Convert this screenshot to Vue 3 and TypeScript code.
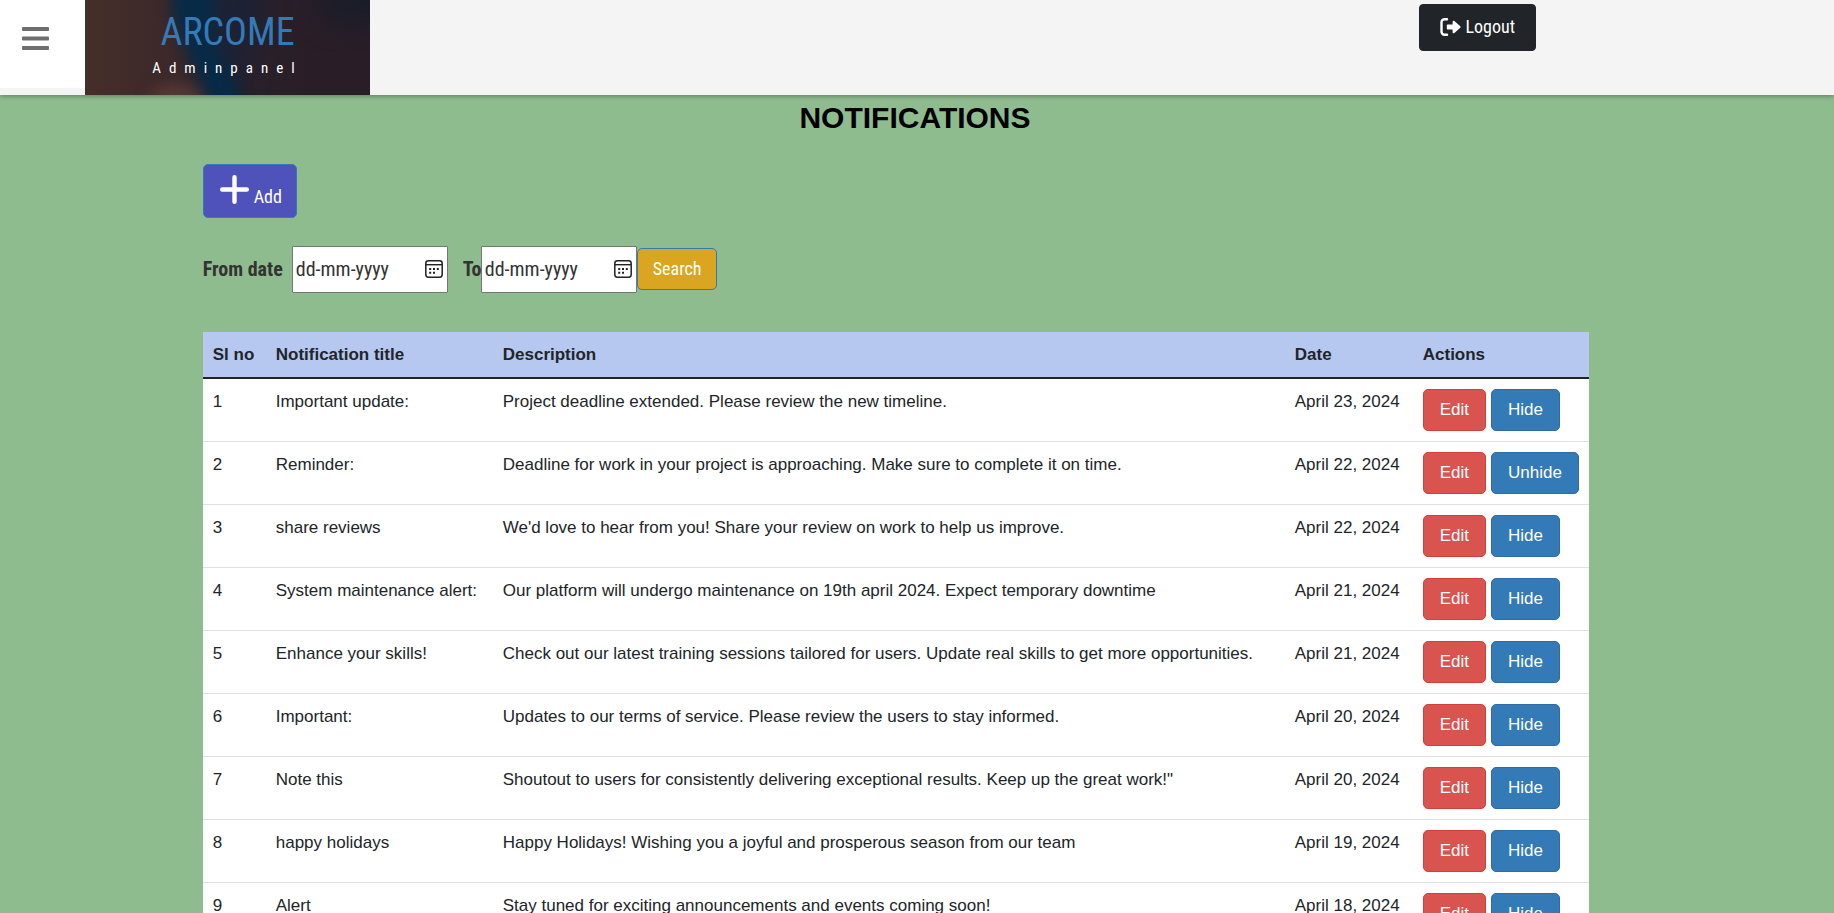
<script setup lang="ts">
import { ref } from 'vue'

interface Notice {
  title: string
  description: string
  date: string
  hidden?: boolean
}

const fromDate = ref('')
const toDate = ref('')

const notices = ref<Notice[]>([
  { title: 'Important update:', description: 'Project deadline extended. Please review the new timeline.', date: 'April 23, 2024' },
  { title: 'Reminder:', description: 'Deadline for work in your project is approaching. Make sure to complete it on time.', date: 'April 22, 2024', hidden: true },
  { title: 'share reviews', description: "We'd love to hear from you! Share your review on work to help us improve.", date: 'April 22, 2024' },
  { title: 'System maintenance alert:', description: 'Our platform will undergo maintenance on 19th april 2024. Expect temporary downtime', date: 'April 21, 2024' },
  { title: 'Enhance your skills!', description: 'Check out our latest training sessions tailored for users. Update real skills to get more opportunities.', date: 'April 21, 2024' },
  { title: 'Important:', description: 'Updates to our terms of service. Please review the users to stay informed.', date: 'April 20, 2024' },
  { title: 'Note this', description: 'Shoutout to users for consistently delivering exceptional results. Keep up the great work!"', date: 'April 20, 2024' },
  { title: 'happy holidays', description: 'Happy Holidays! Wishing you a joyful and prosperous season from our team', date: 'April 19, 2024' },
  { title: 'Alert', description: 'Stay tuned for exciting announcements and events coming soon!', date: 'April 18, 2024' },
])
</script>

<template>
  <div class="page">
    <header class="topbar">
      <button class="menu" type="button" aria-label="Menu">
        <svg width="27" height="24" viewBox="0 0 27 24" aria-hidden="true">
          <g fill="#6e6e6e">
            <rect width="27" height="4" rx="1" />
            <rect y="9.5" width="27" height="4" rx="1" />
            <rect y="19" width="27" height="4" rx="1" />
          </g>
        </svg>
      </button>
      <a class="brand" href="#">
        <svg class="brand-art" viewBox="0 0 285 95" preserveAspectRatio="none" aria-hidden="true">
          <defs>
            <filter id="soft" x="-50%" y="-50%" width="200%" height="200%" color-interpolation-filters="sRGB">
              <feGaussianBlur stdDeviation="7" />
            </filter>
            <filter id="wide" x="-50%" y="-50%" width="200%" height="200%" color-interpolation-filters="sRGB">
              <feGaussianBlur stdDeviation="14" />
            </filter>
            <linearGradient id="base">
              <stop offset="0" stop-color="#452f2a" />
              <stop offset=".35" stop-color="#3a272a" />
              <stop offset=".55" stop-color="#2a202a" />
              <stop offset="1" stop-color="#291d27" />
            </linearGradient>
          </defs>
          <rect width="285" height="95" fill="url(#base)" />
          <ellipse cx="94" cy="98" rx="30" ry="14" fill="#553935" filter="url(#soft)" />
          <path d="M120-20h60l-10 60-30 80h-20z" fill="#15233a" opacity=".7" filter="url(#wide)" />
          <path d="M84-20h48l-4 60 18 35 20 45h-28L106 62 88 20z" fill="#032b4a" opacity=".9" filter="url(#soft)" />
          <ellipse cx="280" cy="0" rx="50" ry="26" fill="#1a1d29" filter="url(#wide)" />
        </svg>
        <span class="brand-name">ARCOME</span>
        <span class="brand-sub">Adminpanel</span>
      </a>
      <button class="logout" type="button">
        <svg width="21" height="18" viewBox="0 0 21 18" aria-hidden="true">
          <path d="M7 1.3H4.5a3 3 0 0 0-3 3v9.4a3 3 0 0 0 3 3H7" fill="none" stroke="#fff" stroke-width="2.4" stroke-linecap="round" />
          <path d="M7.8 6.5h4.8V3.7c0-1 1.1-1.3 1.8-.7l5.9 5.3c.4.4.4 1 0 1.4L14.4 15c-.7.6-1.8.3-1.8-.7v-2.8H7.8c-.6 0-1-.4-1-1v-3c0-.6.4-1 1-1z" fill="#fff" />
        </svg>
        Logout
      </button>
    </header>

    <main>
      <h1>NOTIFICATIONS</h1>
      <div class="content">
        <button class="add" type="button">
          <svg width="29" height="29" viewBox="0 0 29 29" aria-hidden="true">
            <path d="M14.5 2.2v24.6M2.2 14.5h24.6" stroke="#fff" stroke-width="4.4" stroke-linecap="round" />
          </svg>
          <span>Add</span>
        </button>

        <form class="filter" @submit.prevent>
          <label class="from-label" for="from">From date</label>
          <div class="date">
            <input id="from" v-model="fromDate" type="text" placeholder="dd-mm-yyyy" />
            <button type="button" aria-label="Choose from date">
              <svg width="18" height="18" viewBox="0 0 18 18" aria-hidden="true">
                <rect x=".8" y=".8" width="16.4" height="16.4" rx="2.6" fill="none" stroke="#222" stroke-width="1.5" />
                <path d="M1 4.7h16" stroke="#222" stroke-width="1.4" />
                <path d="M8 8h2v2H8zM11.8 8h2v2h-2zM4.2 8h2v2h-2zM4.2 11.8h2v2h-2zM8 11.8h2v2H8z" fill="#222" />
              </svg>
            </button>
          </div>
          <label class="to-label" for="to">To</label>
          <div class="date">
            <input id="to" v-model="toDate" type="text" placeholder="dd-mm-yyyy" />
            <button type="button" aria-label="Choose to date">
              <svg width="18" height="18" viewBox="0 0 18 18" aria-hidden="true">
                <rect x=".8" y=".8" width="16.4" height="16.4" rx="2.6" fill="none" stroke="#222" stroke-width="1.5" />
                <path d="M1 4.7h16" stroke="#222" stroke-width="1.4" />
                <path d="M8 8h2v2H8zM11.8 8h2v2h-2zM4.2 8h2v2h-2zM4.2 11.8h2v2h-2zM8 11.8h2v2H8z" fill="#222" />
              </svg>
            </button>
          </div>
          <button class="search" type="submit">Search</button>
        </form>

        <table>
          <colgroup>
            <col class="col-number" />
            <col class="col-title" />
            <col class="col-description" />
            <col class="col-date" />
            <col class="col-actions" />
          </colgroup>
          <thead>
            <tr>
              <th scope="col">Sl no</th>
              <th scope="col">Notification title</th>
              <th scope="col">Description</th>
              <th scope="col">Date</th>
              <th scope="col">Actions</th>
            </tr>
          </thead>
          <tbody>
            <tr v-for="(notice, index) in notices" :key="index">
              <td>{{ index + 1 }}</td>
              <td>{{ notice.title }}</td>
              <td>{{ notice.description }}</td>
              <td>{{ notice.date }}</td>
              <td>
                <div class="actions">
                  <button class="edit" type="button">Edit</button>
                  <button class="toggle" type="button" @click="notice.hidden = !notice.hidden">
                    {{ notice.hidden ? 'Unhide' : 'Hide' }}
                  </button>
                </div>
              </td>
            </tr>
          </tbody>
        </table>
      </div>
    </main>
  </div>
</template>

<style>
body {
  margin: 0;
  background: #8fbc8f;
}
html {
  scrollbar-width: none;
}
</style>

<style scoped>
.page {
  min-height: 100vh;
  background: #8fbc8f;
  color: #212529;
  font-family: 'Roboto Condensed', 'Liberation Sans Narrow', 'Liberation Sans', sans-serif;
  font-size: 18px;
  line-height: 25px;
}
.page * {
  box-sizing: border-box;
}
button {
  font: inherit;
  color: #fff;
  cursor: pointer;
}
svg {
  display: block;
  flex: none;
}
.topbar {
  position: relative;
  display: flex;
  align-items: flex-start;
  height: 95px;
  background: #f4f4f4;
  box-shadow: 0 1px 5px rgba(0, 0, 0, 0.35);
}
.menu {
  width: 85px;
  height: 88px;
  padding: 0 0 10px 22px;
  border: 0;
  background: #fff;
}
.brand {
  position: relative;
  display: flex;
  flex-direction: column;
  align-items: center;
  width: 285px;
  height: 95px;
  padding-top: 11px;
  overflow: hidden;
  text-decoration: none;
}
.brand-art {
  position: absolute;
  inset: 0;
  width: 100%;
  height: 100%;
}
.brand-name,
.brand-sub {
  position: relative;
}
.brand-name {
  font-size: 38px;
  line-height: 42px;
  color: #337ab7;
}
.brand-sub {
  margin-top: 4px;
  font-size: 15px;
  line-height: 22px;
  letter-spacing: 8px;
  color: #fff;
}
.logout {
  display: flex;
  align-items: center;
  gap: 4px;
  height: 47px;
  margin: 4px 16.25% 0 auto;
  padding: 0 20px 2px;
  border: 1px solid #212529;
  border-radius: 4px;
  background: #212529;
}
h1 {
  margin: 0;
  padding: 6px 4px 0 0;
  font: bold 30px/33px 'Liberation Sans', Arial, sans-serif;
  text-align: center;
  color: #000;
}
.content {
  display: flex;
  flex-direction: column;
  align-items: flex-start;
  padding: 30px 11% 0;
}
.add,
.filter,
table {
  margin-left: 1px;
}
.add {
  display: flex;
  align-items: flex-start;
  gap: 5px;
  height: 54px;
  padding: 10px 14px 8px 16px;
  border: 1px solid #337ab7;
  border-radius: 5px;
  background: #4f52ba;
}
.add span {
  padding-top: 9px;
}
.filter {
  display: flex;
  align-items: center;
  margin-top: 28px;
}
.filter label {
  font-size: 20px;
  font-weight: 700;
  color: #333;
}
.from-label {
  width: 89px;
}
.to-label {
  margin-left: 15px;
  width: 18px;
}
.date {
  display: flex;
  align-items: center;
  width: 156px;
  height: 47px;
  border: 1px solid #767676;
  border-radius: 1px;
  background: #fff;
}
.date input {
  flex: 1;
  min-width: 0;
  height: 100%;
  padding: 0 0 2px 3px;
  border: 0;
  outline: 0;
  background: transparent;
  font: inherit;
  font-size: 20px;
  color: #333;
}
.date input::placeholder {
  color: #333;
  opacity: 1;
}
.date button {
  padding: 0 4px 2px 0;
  border: 0;
  background: none;
}
.search {
  height: 42px;
  margin-bottom: 2px;
  padding: 0 15px;
  border: 1px solid #337ab7;
  border-radius: 5px;
  background: #daa520;
}
table {
  margin-top: 39px;
  border-collapse: separate;
  border-spacing: 0;
  background: #fff;
  font-family: 'Liberation Sans', Arial, sans-serif;
  font-size: 17px;
  white-space: nowrap;
}
.col-number {
  width: 63px;
}
.col-title {
  width: 227px;
}
.col-description {
  width: 792px;
}
.col-date {
  width: 128px;
}
.col-actions {
  width: 175px;
}
th,
td {
  padding: 10px;
  text-align: left;
  vertical-align: top;
}
th {
  background: #b6c8f0;
  border-bottom: 2px solid #212529;
}
td {
  border-bottom: 1px solid #dee2e6;
}
.actions {
  display: flex;
  gap: 5px;
}
.actions button {
  height: 42px;
  padding: 0 16px 2px;
  border: 1px solid #d43f3a;
  border-radius: 5px;
  background: #d9534f;
}
.actions .toggle {
  border-color: #2e6da4;
  background: #337ab7;
}
</style>
